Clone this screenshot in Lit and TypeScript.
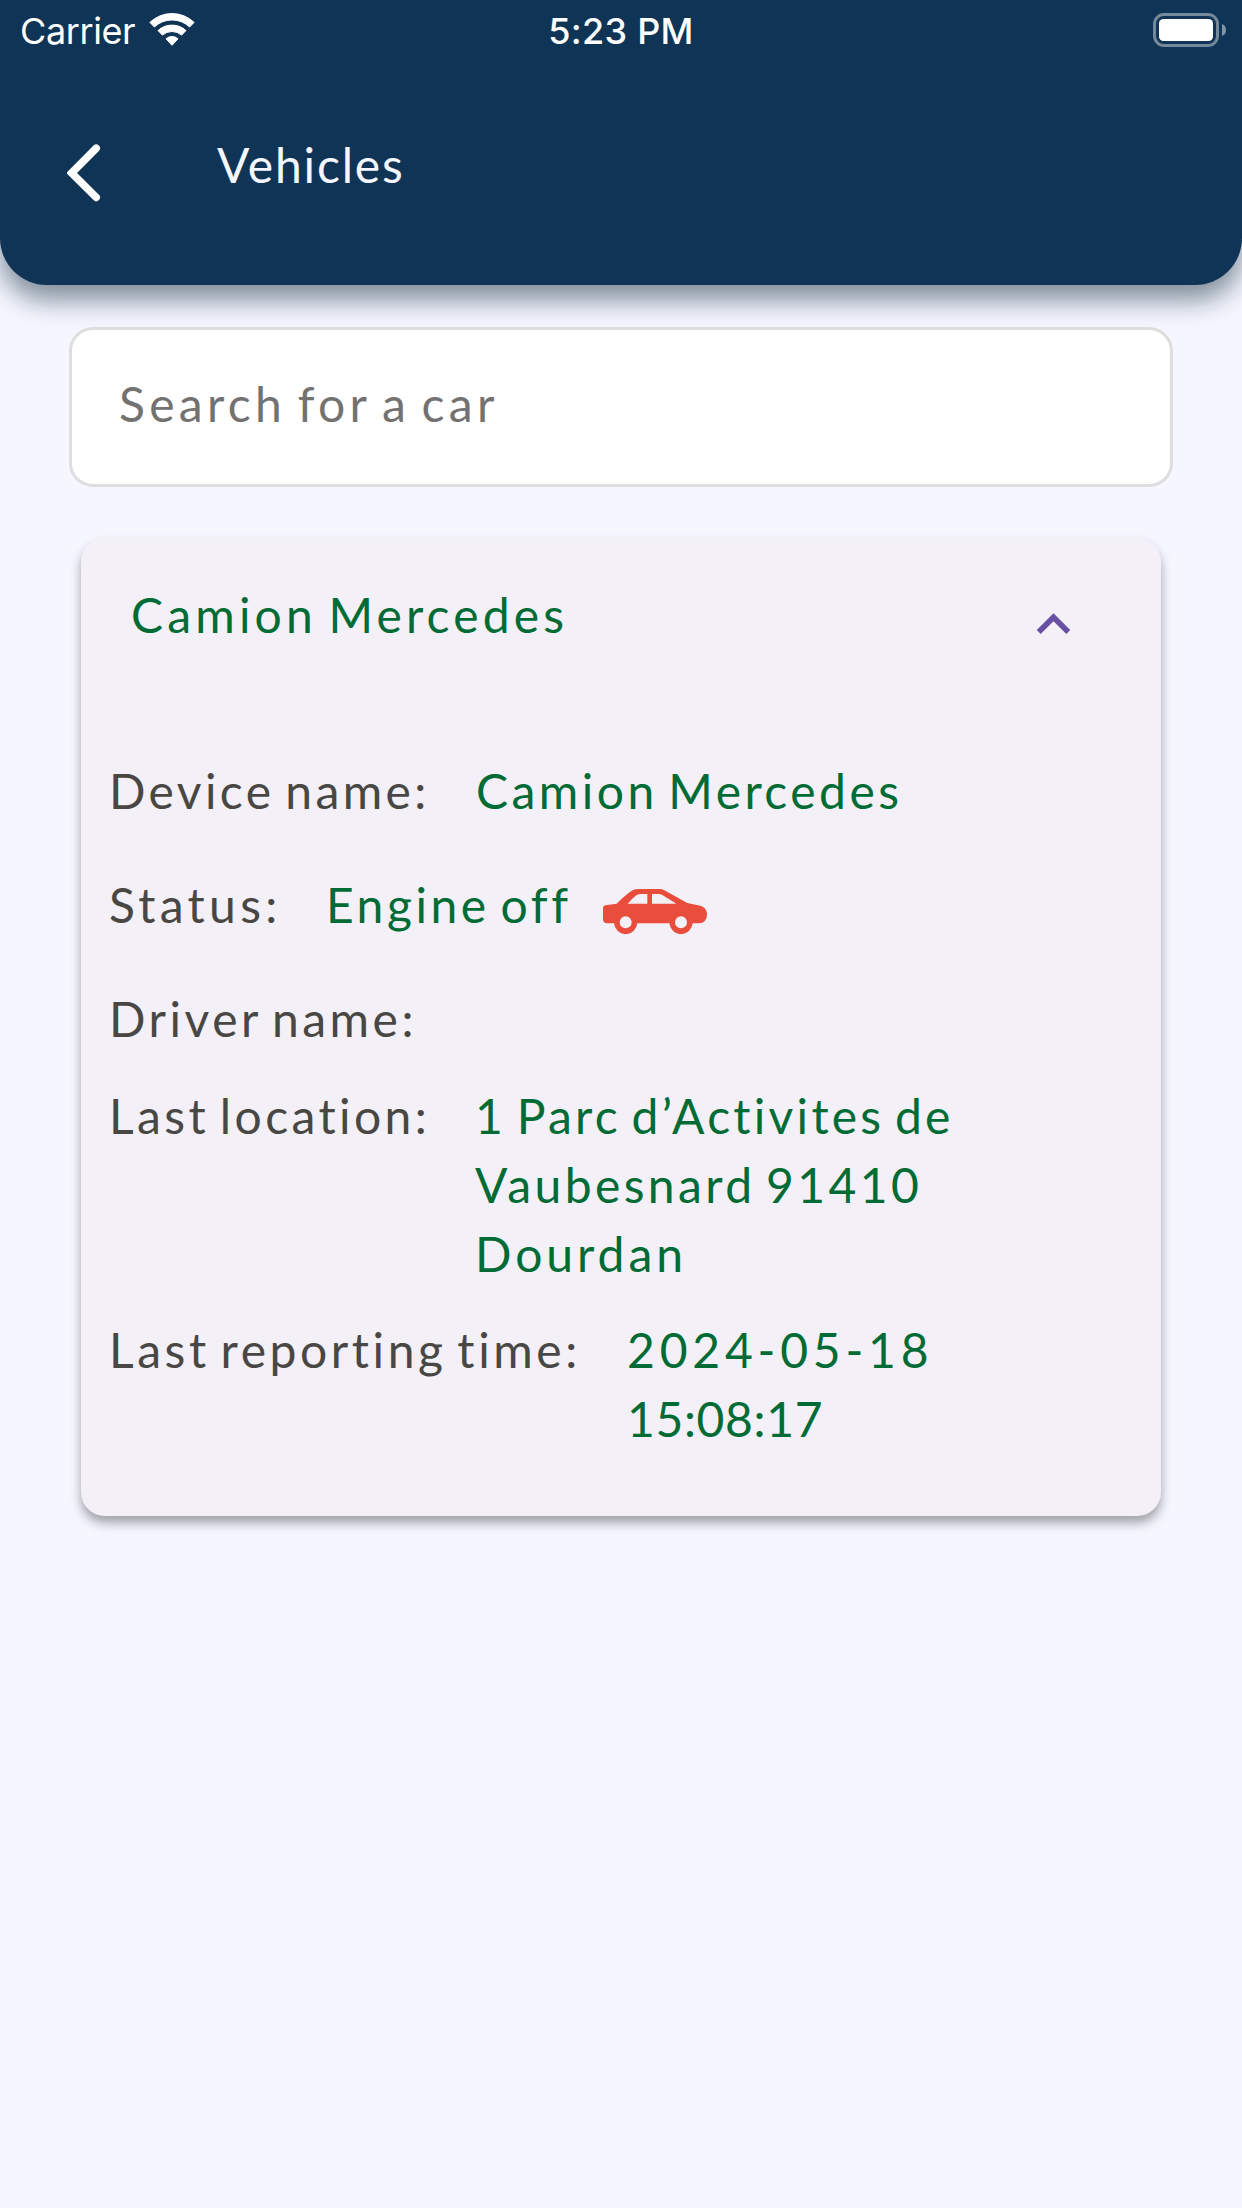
import { LitElement, html, css, svg, nothing } from "lit";
import { customElement, property, state } from "lit/decorators.js";

interface Row {
  kind: string;
  label: string;
  lines: { text: string; fit: string }[];
  car?: boolean;
}

const rows: Row[] = [
  { kind: "device", label: "Device name:", lines: [{ text: "Camion Mercedes", fit: "wide" }] },
  { kind: "status", label: "Status:", lines: [{ text: "Engine off", fit: "engine" }], car: true },
  { kind: "driver", label: "Driver name:", lines: [] },
  {
    kind: "location",
    label: "Last location:",
    lines: [
      { text: "1 Parc d’Activites de", fit: "street" },
      { text: "Vaubesnard 91410", fit: "zip" },
      { text: "Dourdan", fit: "city" },
    ],
  },
  {
    kind: "reporting",
    label: "Last reporting time:",
    lines: [
      { text: "2024-05-18", fit: "date" },
      { text: "15:08:17", fit: "time" },
    ],
  },
];

const carIcon = svg`
  <path fill="#e94e3d" fill-rule="evenodd" d="M39 113Q39 107 46 106L80 101Q106 75 124 63Q133 57 143 57H209Q216 57 223 61L292 99L331 107Q351 113 351 134Q351 158 326 160H307.9A35 35 0 0 1 238.1 160H141.9A35 35 0 0 1 72.1 160H52Q39 158 39 149Z
    M113 101H172V72H153Q146 72 139 76Q125 87 113 101Z
    M186 101H259L217 75Q212 72 205 72H186Z
    M125 157A18 18 0 1 0 89 157A18 18 0 1 0 125 157Z
    M291 157A18 18 0 1 0 255 157A18 18 0 1 0 291 157Z"/>`;

@customElement("status-bar")
export class StatusBar extends LitElement {
  static styles = css`
    :host {
      display: grid;
      grid-template-columns: 1fr auto 1fr;
      height: 60px;
      box-sizing: border-box;
      padding: 9px 16px 0 20px;
      color: #fff;
      font: 400 36px/44px Inter, "Liberation Sans", sans-serif;
      word-spacing: 0;
    }
    .carrier { display: flex; letter-spacing: -0.4px; }
    .wifi { width: 46px; height: 34px; margin: 4px 0 0 14px; }
    .time { font-weight: 500; letter-spacing: 0.3px; margin-right: 4px; }
    .battery { width: 73px; height: 34px; margin-top: 4px; justify-self: end; }
  `;
  render() {
    return html`
      <div class="carrier">
        <span>Carrier</span>
        <svg class="wifi" viewBox="0 0 46 34" fill="#fff" stroke="#fff" stroke-width="1" stroke-linejoin="round">
          <path d="M.9 9.4A32 32 0 0 1 45.1 9.4L40.6 14A25.5 25.5 0 0 0 5.4 14Z" />
          <path d="M9 17.6A20.6 20.6 0 0 1 37 17.6L32.6 22.1A14.6 14.6 0 0 0 13.4 22.1Z" />
          <path d="M17 25.8A9 9 0 0 1 29 25.8L23 32.3Z" />
        </svg>
      </div>
      <span class="time">5:23 PM</span>
      <svg class="battery" viewBox="0 0 73 34">
        <rect x="1.5" y="1.5" width="63" height="31" rx="9.5" fill="none" stroke="#fff" stroke-opacity=".42" stroke-width="3" />
        <rect x="6" y="6" width="54" height="22" rx="4.5" fill="#fff" />
        <path d="M69 11Q73 12.5 73 17T69 23Z" fill="#fff" fill-opacity=".48" />
      </svg>
    `;
  }
}

@customElement("vehicle-card")
export class VehicleCard extends LitElement {
  @property() name = "";
  @state() private open = true;

  static styles = css`
    :host {
      display: block;
      background: #f3f0f7;
      border-radius: 24px;
      box-shadow: 0 7px 11px rgba(0, 0, 0, 0.34);
      padding-bottom: 63px;
    }
    .head {
      display: flex;
      justify-content: space-between;
      align-items: flex-start;
      height: 218px;
      box-sizing: border-box;
      padding: 49px 74px 0 50px;
    }
    .name { line-height: 56px; letter-spacing: 4.17px; color: #006b35; }
    .chevron { width: 67px; height: 67px; margin-top: 4px; fill: #6750a4; }
    .rows { display: flex; flex-direction: column; padding-left: 28px; line-height: 69px; }
    .row { display: flex; margin-bottom: 45px; }
    .driver { margin-bottom: 28px; }
    .location { margin-bottom: 27px; }
    .reporting { margin-bottom: 0; }
    .label { color: #484744; letter-spacing: 3.4px; white-space: nowrap; }
    .driver .label { letter-spacing: 3.53px; }
    .device .label { width: 367px; }
    .status .label { width: 217px; letter-spacing: 4.3px; }
    .location .label { width: 366px; }
    .reporting .label { width: 518px; letter-spacing: 3.56px; }
    .value { color: #006b35; white-space: nowrap; }
    .line { display: block; }
    .wide { letter-spacing: 3.45px; }
    .engine { letter-spacing: 3.55px; }
    .street { letter-spacing: 3.26px; }
    .zip { letter-spacing: 3.38px; }
    .city { letter-spacing: 3.97px; }
    .date { letter-spacing: 4.8px; }
    .time { letter-spacing: 0.64px; }
    .car { width: 104px; height: 45px; margin: 19px 0 0 31px; }
  `;
  render() {
    return html`
      <div class="head" @click=${() => (this.open = !this.open)}>
        <span class="name">${this.name}</span>
        <svg class="chevron" viewBox="0 0 24 24"><path d="M7.41 15.41 12 10.83l4.59 4.58L18 14l-6-6-6 6z" /></svg>
      </div>
      ${this.open
        ? html`<div class="rows">
            ${rows.map(
              (r) => html`<div class="row ${r.kind}">
                <span class="label">${r.label}</span>
                <span class="value">${r.lines.map((l) => html`<span class="line ${l.fit}">${l.text}</span>`)}</span>
                ${r.car ? html`<svg class="car" viewBox="39 57 312 135">${carIcon}</svg>` : nothing}
              </div>`
            )}
          </div>`
        : nothing}
    `;
  }
}

@customElement("app-root")
export class AppRoot extends LitElement {
  static styles = css`
    :host {
      display: block;
      min-height: 2208px;
      background: #f5f6ff;
      font: 400 48px/56px Lato, "Open Sans", sans-serif;
      word-spacing: -5px;
    }
    .header {
      height: 285px;
      background: #103455;
      border-radius: 0 0 47px 47px;
      box-shadow: 0 15px 26px rgba(12, 40, 55, 0.5);
    }
    .nav { display: flex; align-items: flex-start; padding: 77px 0 0 67px; }
    .back { width: 34px; height: 58px; margin: 7px 116px 0 0; }
    .title { color: #f5f6ff; letter-spacing: 1.84px; }
    .content { padding: 42px 69px 0 69px; }
    .search {
      display: block;
      width: 100%;
      height: 160px;
      box-sizing: border-box;
      margin: 0 0 51px;
      padding: 0 47px 8px;
      border: 3px solid #dedede;
      border-radius: 24px;
      background: #fff;
      font: inherit;
      letter-spacing: 4.3px;
      word-spacing: -5px;
      outline: none;
    }
    .search::placeholder { color: #737271; opacity: 1; }
    .card { margin: 0 12px; }
  `;
  render() {
    return html`
      <div class="header">
        <status-bar></status-bar>
        <div class="nav">
          <svg class="back" viewBox="0 0 34 58" fill="none" stroke="#fff" stroke-width="7.6" stroke-linecap="round">
            <path d="M29.2 4.2 4.6 29 29.2 53.4" />
          </svg>
          <span class="title">Vehicles</span>
        </div>
      </div>
      <div class="content">
        <input class="search" placeholder="Search for a car" />
        <vehicle-card class="card" name="Camion Mercedes"></vehicle-card>
      </div>
    `;
  }
}
